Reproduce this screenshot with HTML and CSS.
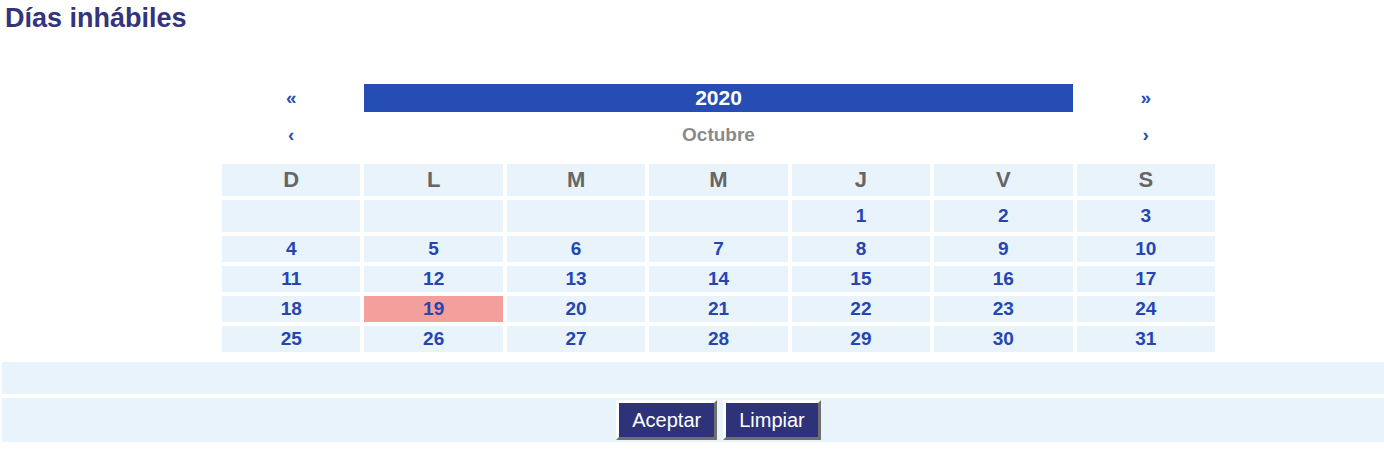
FILE: index.html
```html
<!DOCTYPE html>
<html lang="es">
<head>
<meta charset="utf-8">
<title>Días inhábiles</title>
<link rel="stylesheet" href="styles.css">
</head>
<body>
<div class="page">
  <header class="head">
    <h1 class="title">Días inhábiles</h1>
  </header>
  <div class="calendar">
    <a class="nav">&laquo;</a>
    <div class="year">2020</div>
    <a class="nav">&raquo;</a>
    <a class="nav nav-month">&lsaquo;</a>
    <div class="month">Octubre</div>
    <a class="nav nav-month">&rsaquo;</a>

    <div class="wd">D</div><div class="wd">L</div><div class="wd">M</div><div class="wd">M</div><div class="wd">J</div><div class="wd">V</div><div class="wd">S</div>

    <div class="day tall"></div><div class="day tall"></div><div class="day tall"></div><div class="day tall"></div><div class="day tall">1</div><div class="day tall">2</div><div class="day tall">3</div>
    <div class="day">4</div><div class="day">5</div><div class="day">6</div><div class="day">7</div><div class="day">8</div><div class="day">9</div><div class="day">10</div>
    <div class="day">11</div><div class="day">12</div><div class="day">13</div><div class="day">14</div><div class="day">15</div><div class="day">16</div><div class="day">17</div>
    <div class="day">18</div><div class="day marked">19</div><div class="day">20</div><div class="day">21</div><div class="day">22</div><div class="day">23</div><div class="day">24</div>
    <div class="day">25</div><div class="day">26</div><div class="day">27</div><div class="day">28</div><div class="day">29</div><div class="day">30</div><div class="day">31</div>
  </div>
  <div class="bar bar-empty"></div>
  <div class="bar bar-actions">
    <button class="btn" type="button">Aceptar</button>
    <button class="btn" type="button">Limpiar</button>
  </div>
</div>
</body>
</html>
```
FILE: styles.css
```css
html, body {
  margin: 0;
  padding: 0;
  overflow: hidden;
  background: #ffffff;
}
body {
  font-family: "Liberation Sans", Arial, Helvetica, sans-serif;
}
.page {
  width: 1437px;
  display: flex;
  flex-direction: column;
}
.head {
  height: 84px;
}
.title {
  margin: 0;
  padding: 2px 0 0 5px;
  font-size: 27px;
  line-height: 32px;
  font-weight: bold;
  color: #34347a;
}
.calendar {
  width: 993px;
  margin: 0 auto;
  display: grid;
  grid-template-columns: repeat(7, 1fr);
  grid-template-rows: 28px 44px 32px 32px 26px 26px 26px 26px;
  gap: 4px;
}
.nav {
  display: flex;
  align-items: center;
  justify-content: center;
  color: #2a4cb5;
  font-weight: bold;
  font-size: 19px;
  cursor: pointer;
}
.nav-month {
  padding-bottom: 6px;
}
.year {
  grid-column: span 5;
  background: #254db4;
  color: #ffffff;
  font-weight: bold;
  font-size: 21px;
  display: flex;
  align-items: center;
  justify-content: center;
}
.month {
  grid-column: span 5;
  color: #8a8a8a;
  font-weight: bold;
  font-size: 19px;
  display: flex;
  align-items: center;
  justify-content: center;
  padding-bottom: 6px;
}
.wd {
  background: #e8f3fc;
  color: #666666;
  font-weight: bold;
  font-size: 22px;
  display: flex;
  align-items: center;
  justify-content: center;
}
.day {
  background: #e8f3fc;
  color: #2546b2;
  font-weight: bold;
  font-size: 19px;
  display: flex;
  align-items: center;
  justify-content: center;
}
.day.marked {
  background: #f39f9c;
}
.bar {
  margin: 0 2px;
  background: #e8f3fc;
}
.bar-empty {
  height: 32px;
  margin-top: 10px;
}
.bar-actions {
  margin-top: 4px;
  padding: 2px 0;
  display: flex;
  justify-content: center;
  gap: 6px;
}
.btn {
  height: 40px;
  padding: 0 13px;
  border: 3px solid;
  border-color: #ffffff #6f6f6f #6f6f6f #ffffff;
  background: #2e3379;
  color: #ffffff;
  font-family: "Liberation Sans", Arial, Helvetica, sans-serif;
  font-size: 20px;
  cursor: pointer;
}
```
